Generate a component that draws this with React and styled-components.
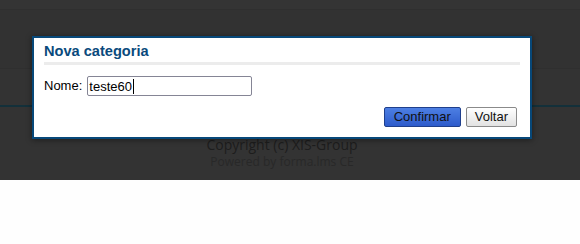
import React from 'react'
import styled, { createGlobalStyle } from 'styled-components'

const GlobalStyle = createGlobalStyle`
  body {
    margin: 0;
    background: #fefefe;
    font-family: "Liberation Sans", Arial, sans-serif;
  }
`

const App = () => {
  return (
    <>
      <GlobalStyle />
      <Page>
        <TopBand />
        <NavBand />
        <ContentBand />
        <Footer>
          <Copy>Copyright (c) XIS-Group</Copy>
          <Powered>Powered by forma.lms CE</Powered>
        </Footer>

        <Dialog>
          <Title>Nova categoria</Title>
          <Rule />
          <FieldRow>
            <Label>Nome:</Label>
            <Field role="textbox">
              teste60<Caret />
            </Field>
          </FieldRow>
          <Actions>
            <Button $primary>Confirmar</Button>
            <Button>Voltar</Button>
          </Actions>
        </Dialog>
      </Page>
    </>
  )
}

export default App

const Page = styled.div`
  position: relative;
  height: 180px;
  background: #333333;
  display: flex;
  flex-direction: column;
`

const TopBand = styled.div`
  height: 9px;
  background: #343434;
  border-bottom: 1px solid #2f2f2f;
`

const NavBand = styled.div`
  height: 58px;
  background: #323232;
  border-bottom: 1px solid #2f2f2f;
`

const ContentBand = styled.div`
  height: 36px;
  background: #333333;
  border-bottom: 2px solid #13303a;
`

const Footer = styled.div`
  display: flex;
  flex-direction: column;
  align-items: center;
  padding: 29px 16px 0 0;
  font-family: "Open Sans", sans-serif;
`

const Copy = styled.div`
  font-size: 14px;
  line-height: 18px;
  color: #1d1d1d;
`

const Powered = styled.div`
  font-size: 12px;
  line-height: 16px;
  color: #282828;
`

const Dialog = styled.div`
  position: absolute;
  left: 32px;
  top: 36px;
  width: 500px;
  height: 103px;
  box-sizing: border-box;
  background: #fff;
  border: 2px solid #074879;
  box-shadow: 0 1px 6px rgba(0, 0, 0, 0.45);
  padding: 5px 10px 0 10px;
  display: flex;
  flex-direction: column;
`

const Title = styled.div`
  font-size: 14.6px;
  font-weight: bold;
  line-height: 16px;
  color: #0a4a7c;
`

const Rule = styled.div`
  height: 3px;
  margin-top: 3px;
  background: #ececec;
`

const FieldRow = styled.div`
  display: flex;
  align-items: center;
  gap: 5px;
  margin-top: 11px;
  font-size: 13px;
  color: #000;
`

const Label = styled.span`
  line-height: 20px;
`

const Field = styled.div`
  display: flex;
  align-items: center;
  width: 165px;
  height: 20px;
  box-sizing: border-box;
  border: 1px solid #858595;
  border-radius: 2px;
  padding: 0 1px;
  font-size: 13px;
  color: #000;
  background: #fff;
`

const Caret = styled.span`
  width: 1px;
  height: 15px;
  margin-left: 1px;
  background: #000;
`

const Actions = styled.div`
  display: flex;
  justify-content: flex-end;
  gap: 5px;
  margin-top: 11px;
  padding-right: 3px;
`

const Button = styled.button`
  height: 20px;
  box-sizing: border-box;
  padding: 0 ${p => (p.$primary ? '9px' : '8px')};
  border-radius: 2px;
  font-family: "Liberation Sans", Arial, sans-serif;
  font-size: 13px;
  line-height: 18px;
  color: #111;
  border: 1px solid ${p => (p.$primary ? '#1f3f8c' : '#8a8a8a')};
  background: ${p =>
    p.$primary
      ? 'linear-gradient(#4d7fe3, #2d5bcb)'
      : 'linear-gradient(#ffffff, #e2e2e2)'};
`
